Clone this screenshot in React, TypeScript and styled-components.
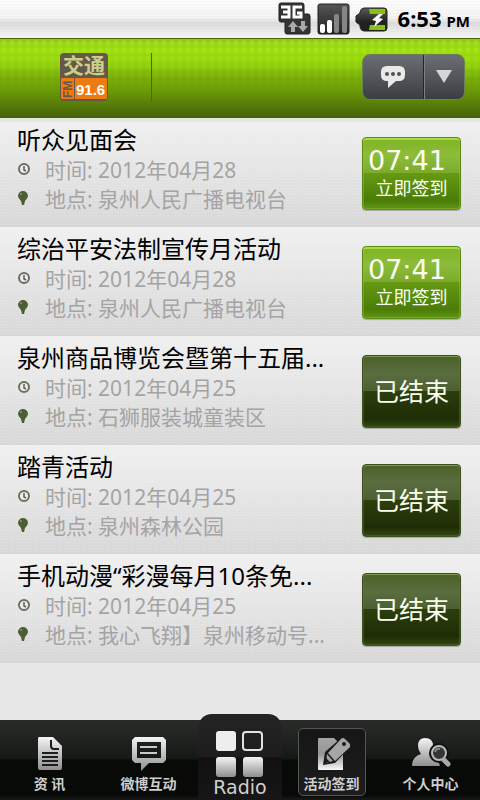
import React from "react";
import styled, { createGlobalStyle, css } from "styled-components";

const GlobalStyle = createGlobalStyle`
  * { box-sizing: border-box; }
  body {
    margin: 0;
    background: #e7e7e7;
    font-family: "Noto Sans", "Noto Sans CJK SC", sans-serif;
  }
  button { font: inherit; color: inherit; padding: 0; border: 0; cursor: pointer; }
`;

const Page = styled.div`
  min-height: 100vh;
  display: flex;
  flex-direction: column;
  background: #e7e7e7;
`;

const StatusBar = styled.div`
  height: 38px;
  flex: none;
  display: flex;
  align-items: center;
  justify-content: flex-end;
  gap: 5px;
  padding-right: 10px;
  background:
    repeating-linear-gradient(0deg, rgba(0, 0, 0, 0.02) 0 1px, transparent 1px 3px),
    linear-gradient(#fdfdfd 0%, #f4f4f4 45%, #dcdcdc 62%, #ededed 85%, #f5f5f5 100%);
`;

const Clock = styled.time`
  display: flex;
  align-items: baseline;
  gap: 5px;
  margin-left: 4px;
  font-weight: 700;
  font-size: 22px;
  line-height: 30px;
  color: #000;
`;

const Meridiem = styled.span`
  font-size: 15px;
`;

const Header = styled.header`
  height: 80px;
  flex: none;
  display: flex;
  align-items: center;
  padding: 0 15px 3px 60px;
  border-top: 1px solid #4c6a0c;
  background:
    linear-gradient(rgba(150, 216, 10, 0) 0%, rgba(138, 200, 8, 0.4) 30%, #6f9f06 62%, #44610a 100%),
    radial-gradient(circle, rgba(196, 255, 70, 0.3) 0 2px, transparent 4px) 0 0 / 8px 8px,
    linear-gradient(#8cc412 0%, #9fe00e 12%, #96d80a 35%, #6f9f06 62%);
`;

const HeaderDivider = styled.div`
  width: 1px;
  height: 49px;
  margin-left: 43px;
  background: #4b6c08;
`;

const ActionGroup = styled.div`
  display: flex;
  margin-left: auto;
  height: 46px;
  border: 1px solid #6c7f55;
  border-radius: 8px;
  overflow: hidden;
  background: linear-gradient(#6b6e72 0%, #55585c 45%, #3b3e41 100%);
`;

const ActionButton = styled.button<{ $width: number }>`
  width: ${(p) => p.$width}px;
  display: flex;
  align-items: center;
  justify-content: center;
  background: none;
  & + & {
    border-left: 1px solid #222426;
    box-shadow: inset 1px 0 0 #7d8082;
  }
`;

const List = styled.ul`
  flex: 1;
  margin: 0;
  padding: 0;
  list-style: none;
`;

const Row = styled.li`
  display: grid;
  grid-template-columns: minmax(0, 1fr) 99px;
  column-gap: 10px;
  align-items: center;
  padding: 6px 19px 12px 17px;
  border-bottom: 1px solid #d6d6d6;
  background:
    radial-gradient(circle, rgba(255, 255, 255, 0.22) 0 1px, transparent 1px) 0 0 / 3px 3px,
    linear-gradient(#f0f0f0 0%, #e6e6e6 45%, #d8d8d8 100%);
  &:first-child {
    box-shadow: inset 0 4px 0 #e2e8da;
  }
`;

const Title = styled.h2`
  margin: 0;
  font-weight: 400;
  font-size: 24px;
  line-height: 32px;
  color: #000;
  white-space: nowrap;
`;

const Detail = styled.p`
  display: grid;
  grid-template-columns: 28px minmax(0, 1fr);
  margin: 0;
  font-size: 21px;
  line-height: 29px;
  color: #a4a4a4;
  white-space: nowrap;
`;

const DetailIcon = styled.span`
  display: flex;
  align-items: center;
  padding-bottom: 3px;
`;

const StateButton = styled.button<{ $ended: boolean }>`
  height: 73px;
  margin-top: 8px;
  display: flex;
  flex-direction: column;
  align-items: center;
  justify-content: center;
  border-radius: 4px;
  color: #fafff0;
  ${(p) =>
    p.$ended
      ? css`
          border: 1px solid #3c4f1c;
          box-shadow: inset 0 1px 0 #7f9a50, inset 0 0 0 1px rgba(100, 130, 60, 0.35), 0 1px 1px #aaa;
          background: linear-gradient(#4b6126 0%, #596d40 25%, #4c6032 49%, #2c3e0c 50%, #1f2d06 88%, #33470f 100%);
        `
      : css`
          border: 1px solid #5c8a14;
          box-shadow: inset 0 2px 0 #a6dc45, inset 0 0 0 1px rgba(150, 200, 60, 0.4), 0 1px 1px #aaa;
          background: linear-gradient(#7fb322 0%, #8dbc3b 25%, #7cab2c 49%, #659a12 50%, #4b7c08 88%, #5f9613 100%);
        `}
`;

const Countdown = styled.span`
  font-family: "DejaVu Sans", sans-serif;
  font-size: 27px;
  line-height: 30px;
  align-self: flex-start;
  padding-left: 5px;
`;

const CheckIn = styled.span`
  font-size: 18px;
  line-height: 24px;
`;

const Ended = styled.span`
  font-size: 25px;
  line-height: 36px;
`;

const TabBar = styled.nav`
  height: 80px;
  flex: none;
  display: flex;
  background: linear-gradient(#292b29 0%, #151a16 48%, #070b08 50%, #070a07 95%, #151515 98%);
`;

const Tab = styled.button`
  flex: 1;
  display: flex;
  justify-content: center;
  padding: 8px 0 4px;
  background: none;
`;

const TabFace = styled.span<{ $active: boolean }>`
  width: 68px;
  height: 68px;
  display: flex;
  flex-direction: column;
  align-items: center;
  gap: 3px;
  padding-top: 8px;
  border: 1px solid ${(p) => (p.$active ? "#555755" : "transparent")};
  border-radius: 5px;
  background: ${(p) => (p.$active ? "linear-gradient(#151615, #1d1d1d)" : "none")};
`;

const TabLabel = styled.span`
  font-size: 14px;
  line-height: 20px;
  font-weight: 700;
  color: #cfcfcf;
  white-space: nowrap;
`;

const RadioTab = styled.button`
  flex: 0 0 84px;
  display: flex;
  flex-direction: column;
  align-items: center;
  margin-top: -6px;
  padding-top: 17px;
  border-radius: 14px 14px 0 0;
  background: linear-gradient(#242424 0%, #1d1d1d 50%, #111111 51%, #161616 100%);
`;

const RadioLabel = styled.span`
  font-family: "DejaVu Sans", sans-serif;
  font-size: 19px;
  line-height: 18px;
  color: #d0d0d0;
`;

const NetworkIcon = () => (
  <svg width="34" height="34" viewBox="0 0 34 34" aria-hidden="true">
    <path d="M3 1h21a2 2 0 0 1 2 2v9h4a2 2 0 0 1 2 2v16a2 2 0 0 1-2 2H9a2 2 0 0 1-2-2V20H3a2 2 0 0 1-2-2V3a2 2 0 0 1 2-2z" fill="#343434" stroke="#222" />
    <path d="M3 5h8v10H3M5 10h6M24 5h-8v10h7v-4h-4" fill="none" stroke="#fff" strokeWidth="3" />
    <path d="M15 19l5 6h-3v5h-4v-5h-3zM25 30l-5-6h3v-5h4v5h3z" fill="#a9a9a9" />
  </svg>
);

const SignalIcon = () => (
  <svg width="33" height="34" viewBox="0 0 33 34" aria-hidden="true">
    <defs>
      <linearGradient id="signalBack" x1="0" y1="0" x2="0" y2="1">
        <stop offset="0" stopColor="#555" />
        <stop offset="1" stopColor="#222" />
      </linearGradient>
    </defs>
    <rect x="1" y="2" width="31" height="30" rx="2" fill="url(#signalBack)" stroke="#222" />
    <rect x="3" y="22" width="5" height="9" rx="2" fill="#fff" />
    <rect x="10" y="18" width="5" height="13" rx="2" fill="#fff" />
    <rect x="17" y="12" width="5" height="19" rx="2" fill="#858585" />
    <rect x="25" y="4" width="5" height="27" rx="2" fill="#858585" />
  </svg>
);

const BatteryIcon = () => (
  <svg width="34" height="26" viewBox="0 0 34 26" aria-hidden="true">
    <defs>
      <linearGradient id="batteryBack" x1="0" y1="0" x2="0" y2="1">
        <stop offset="0" stopColor="#5a5a5a" />
        <stop offset="0.6" stopColor="#222" />
      </linearGradient>
    </defs>
    <path d="M9 2h20q3 0 3 3v17q0 3-3 3H9q-3 0-4-4v-2l-4-3v-6l4-3V6q1-4 4-4z" fill="url(#batteryBack)" stroke="#222" />
    <path d="M14 3h16v5H15zM15 19h15v5H14z" fill="#8cc010" />
    <path d="M24 8l-7 6 4 1-2 6 9-8-4-1 4-4z" fill="#fff" />
  </svg>
);

const LogoDrawing = styled.svg`
  overflow: visible;
`;

const StationLogo = () => (
  <LogoDrawing width="48" height="48" viewBox="0 0 48 48" role="img" aria-label="交通 FM 91.6">
    <rect width="48" height="48" rx="4" fill="#665848" />
    <rect x="1" y="25" width="13" height="21" rx="1" fill="#ee7a12" />
    <rect x="15" y="25" width="32" height="21" rx="1" fill="#ee7a12" />
    <text x="3" y="20" fontSize="21" fontWeight="700" fontFamily="Noto Sans CJK SC, sans-serif" fill="#c9d08a">交通</text>
    <text transform="translate(12 45) rotate(-90)" fontSize="12" fontWeight="700" fontFamily="Liberation Sans, sans-serif" fill="#665848">FM</text>
    <text x="16" y="42" fontSize="15" fontWeight="700" fontFamily="Liberation Sans, sans-serif" fill="#fff">91.6</text>
  </LogoDrawing>
);

const BubbleIcon = () => (
  <svg width="26" height="24" viewBox="0 0 26 24" aria-hidden="true">
    <path d="M7 1h12q6 0 6 6v3q0 6-6 6h-3l-8 7V16H7q-6 0-6-6V7q0-6 6-6z" fill="#e9e9e9" />
    <circle cx="7" cy="9" r="2" fill="#505356" />
    <circle cx="13" cy="9" r="2" fill="#505356" />
    <circle cx="19" cy="9" r="2" fill="#505356" />
  </svg>
);

const CaretIcon = () => (
  <svg width="16" height="14" viewBox="0 0 16 14" aria-hidden="true">
    <path d="M0 0h16L8 13z" fill="#d6d6d6" />
  </svg>
);

const TimeIcon = () => (
  <svg width="14" height="14" viewBox="0 0 14 14" aria-hidden="true">
    <circle cx="7" cy="7" r="5" fill="#ececec" stroke="#6b705f" strokeWidth="2" />
    <path d="M7 4v4l2 1" fill="none" stroke="#5a5e52" strokeWidth="1.5" />
  </svg>
);

const PinIcon = () => (
  <svg width="12" height="16" viewBox="0 0 12 16" aria-hidden="true">
    <path d="M6 1a5 5 0 0 1 5 5q0 2-3 5l-1 4H5l-1-4Q1 8 1 6a5 5 0 0 1 5-5z" fill="#4c5e34" />
    <circle cx="4" cy="4" r="1" fill="#8a9a72" />
  </svg>
);

const Silver = ({ id }: { id: string }) => (
  <defs>
    <linearGradient id={id} x1="0" y1="0" x2="0" y2="1">
      <stop offset="0" stopColor="#f4f4f4" />
      <stop offset="1" stopColor="#8f8f8f" />
    </linearGradient>
  </defs>
);

const NewsIcon = () => (
  <svg width="34" height="34" viewBox="0 0 34 34" aria-hidden="true">
    <Silver id="news" />
    <path d="M6 0h14l9 9v22q0 2-2 2H7q-2 0-2-2V2q0-2 1-2z" fill="url(#news)" />
    <path d="M18 3v6q0 3 3 3h5" fill="none" stroke="#1a1d1a" strokeWidth="2" />
    <path d="M9 16h16M9 20h16M9 24h16M9 28h16" stroke="#1a1d1a" strokeWidth="2" />
  </svg>
);

const ChatIcon = () => (
  <svg width="34" height="34" viewBox="0 0 34 34" aria-hidden="true">
    <Silver id="chat" />
    <path fillRule="evenodd" d="M3 0h28l3 3v20l-3 3H17l-8 8v-8H3l-3-3V3zM5 5v16h24V5z" fill="url(#chat)" />
    <path d="M8 10h17M8 16h17" stroke="#cacaca" strokeWidth="2" />
  </svg>
);

const RadioIcon = () => (
  <svg width="48" height="47" viewBox="0 0 48 47" aria-hidden="true">
    <Silver id="tiles" />
    <rect x="0" y="0" width="20" height="20" rx="3" fill="#eeeeee" />
    <rect x="27" y="1" width="19" height="18" rx="3" fill="none" stroke="#e2e2e2" strokeWidth="2" />
    <rect x="0" y="26" width="20" height="20" rx="3" fill="url(#tiles)" />
    <rect x="27" y="26" width="20" height="20" rx="3" fill="url(#tiles)" />
  </svg>
);

const WriteIcon = () => (
  <svg width="36" height="34" viewBox="0 0 36 34" aria-hidden="true">
    <defs>
      <linearGradient id="sheet" x1="0" y1="0" x2="0" y2="1">
        <stop offset="0" stopColor="#a5a5a5" />
        <stop offset="0.5" stopColor="#959595" />
        <stop offset="1" stopColor="#f8f8f8" />
      </linearGradient>
    </defs>
    <path d="M5 1h15l9 9v23H5q-1 0-1-1V2q0-1 1-1z" fill="url(#sheet)" />
    <path d="M27 1L11 15 9 28l12-2L35 11z" fill="#191a19" />
    <path fillRule="evenodd" d="M27 2q2-2 4 0l5 5q1 2-1 4L21 24l-7-8zM30 5a2 2 0 1 0 0 4 2 2 0 0 0 0-4z" fill="#a6a6a6" />
    <path d="M13 17l6 7-7 2z" fill="#a0a0a0" />
    <path d="M12 21l4 4-5 1z" fill="#191a19" />
  </svg>
);

const PersonIcon = () => (
  <svg width="40" height="34" viewBox="0 0 40 34" aria-hidden="true">
    <Silver id="person" />
    <path d="M14 1q8 0 8 8 0 5-4 9 9 2 11 11H1q0-9 9-12-3-4-3-8 0-8 7-8z" fill="url(#person)" />
    <circle cx="28" cy="16" r="10" fill="#101410" />
    <circle cx="28" cy="16" r="7" fill="#343634" stroke="#b9b9b9" strokeWidth="2" />
    <path d="M24 15q1-4 5-3" fill="none" stroke="#888" strokeWidth="2" />
    <path d="M33 23l4 4" stroke="#a9a9a9" strokeWidth="5" strokeLinecap="round" />
  </svg>
);

interface Activity {
  title: string;
  date: string;
  place: string;
  ended: boolean;
}

const activities: Activity[] = [
  { title: "听众见面会", date: "2012年04月28", place: "泉州人民广播电视台", ended: false },
  { title: "综治平安法制宣传月活动", date: "2012年04月28", place: "泉州人民广播电视台", ended: false },
  { title: "泉州商品博览会暨第十五届...", date: "2012年04月25", place: "石狮服装城童装区", ended: true },
  { title: "踏青活动", date: "2012年04月25", place: "泉州森林公园", ended: true },
  { title: "手机动漫“彩漫每月10条免...", date: "2012年04月25", place: "我心飞翔】泉州移动号...", ended: true },
];

const ActivityRow = ({ title, date, place, ended }: Activity) => (
  <Row>
    <div>
      <Title>{title}</Title>
      <Detail>
        <DetailIcon><TimeIcon /></DetailIcon>
        <span>时间: {date}</span>
      </Detail>
      <Detail>
        <DetailIcon><PinIcon /></DetailIcon>
        <span>地点: {place}</span>
      </Detail>
    </div>
    <StateButton type="button" $ended={ended}>
      {ended ? (
        <Ended>已结束</Ended>
      ) : (
        <>
          <Countdown>07:41</Countdown>
          <CheckIn>立即签到</CheckIn>
        </>
      )}
    </StateButton>
  </Row>
);

const NavTab = ({ label, icon, active = false }: { label: string; icon: React.ReactNode; active?: boolean }) => (
  <Tab type="button" aria-current={active ? "page" : undefined}>
    <TabFace $active={active}>
      {icon}
      <TabLabel>{label}</TabLabel>
    </TabFace>
  </Tab>
);

export default function App() {
  return (
    <Page>
      <GlobalStyle />
      <StatusBar>
        <NetworkIcon />
        <SignalIcon />
        <BatteryIcon />
        <Clock>6:53<Meridiem>PM</Meridiem></Clock>
      </StatusBar>
      <Header>
        <StationLogo />
        <HeaderDivider />
        <ActionGroup>
          <ActionButton type="button" $width={60} aria-label="消息"><BubbleIcon /></ActionButton>
          <ActionButton type="button" $width={41} aria-label="更多"><CaretIcon /></ActionButton>
        </ActionGroup>
      </Header>
      <List>
        {activities.map((a) => (
          <ActivityRow key={a.title} {...a} />
        ))}
      </List>
      <TabBar>
        <NavTab label="资 讯" icon={<NewsIcon />} />
        <NavTab label="微博互动" icon={<ChatIcon />} />
        <RadioTab type="button">
          <RadioIcon />
          <RadioLabel>Radio</RadioLabel>
        </RadioTab>
        <NavTab label="活动签到" icon={<WriteIcon />} active />
        <NavTab label="个人中心" icon={<PersonIcon />} />
      </TabBar>
    </Page>
  );
}
